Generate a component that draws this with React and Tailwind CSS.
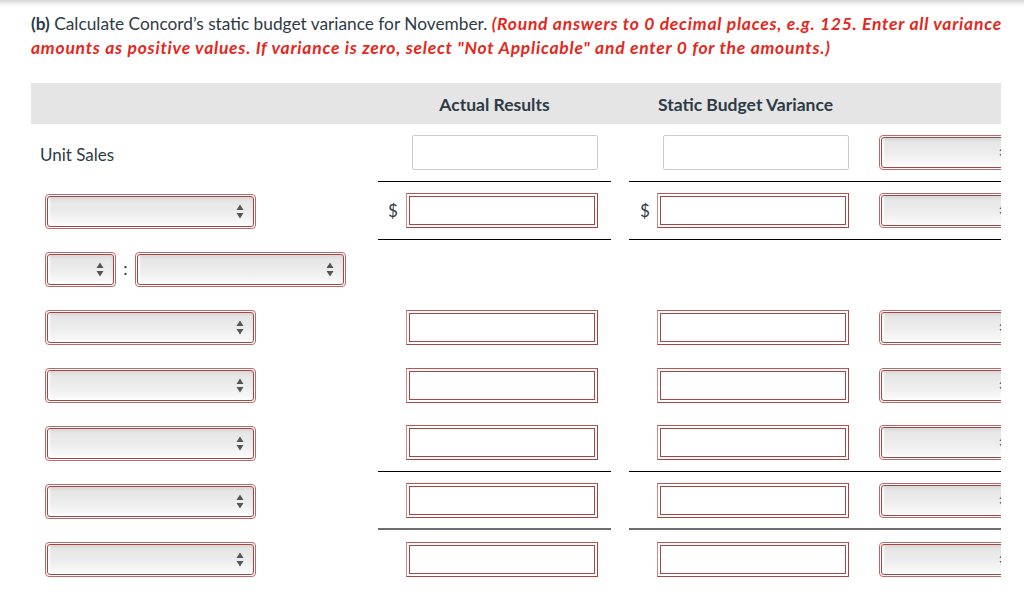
import React from "react";

const font = { fontFamily: "Lato, 'Open Sans', 'Liberation Sans', sans-serif" };

function Arrows() {
  return (
    <svg width="8" height="15" viewBox="0 0 8 15" className="shrink-0">
      <polygon points="0.5,6 4,0.5 7.5,6" fill="#555" />
      <polygon points="0.5,9 7.5,9 4,14.5" fill="#555" />
    </svg>
  );
}

function Select({ w }) {
  return (
    <div
      className="h-[35px] shrink-0 rounded-[4px] border border-[#b86a6a] bg-white p-px"
      style={{ width: w }}
    >
      <div className="flex h-full w-full items-center justify-end rounded-[3px] border border-[#a94442] bg-gradient-to-b from-[#e4e4e4] via-[#ececec] to-[#fbfbfb] pr-[9px] shadow-[inset_2px_-2px_2px_rgba(255,255,255,0.9),inset_0_2px_3px_rgba(0,0,0,0.06)]">
        <Arrows />
      </div>
    </div>
  );
}

function RedInput() {
  return (
    <div className="h-[35px] w-[192px] shrink-0 border border-[#a94442] border-l-[#c98a8a] border-t-[#b55] bg-white p-[2px]">
      <div className="h-full w-full border border-[#a94442] bg-white" />
    </div>
  );
}

function GrayInput() {
  return <div className="h-[35px] w-[186px] shrink-0 rounded-[2px] border border-[#cccccc] bg-white" />;
}

function Dollar() {
  return <span className="w-[10px] text-[17px] text-[#2d3b45]">$</span>;
}

function Row({ left, actual, stat, sel = true, line, h = "h-[58px]" }) {
  const lineCls =
    line === "dark"
      ? "border-b border-black"
      : line === "gray"
      ? "border-b-2 border-[#6e6e6e]"
      : "";
  return (
    <div className={`flex ${h} items-stretch`}>
      <div className="flex w-[347px] shrink-0 items-center">{left}</div>
      <div className={`flex w-[233px] shrink-0 items-center justify-end gap-[8px] pr-[13px] ${lineCls}`}>
        {actual}
      </div>
      <div className="w-[18px] shrink-0" />
      <div className={`flex w-[420px] shrink-0 items-center ${lineCls}`}>
        <div className="flex w-[233px] shrink-0 items-center justify-end gap-[7px] pr-[13px]">{stat}</div>
        <div className="w-[17px] shrink-0" />
        {sel && <Select w={140} />}
      </div>
    </div>
  );
}

export default function App() {
  const dollarIn = (
    <>
      <Dollar />
      <RedInput />
    </>
  );
  return (
    <div className="min-h-[596px] w-[1024px] overflow-hidden bg-white" style={font}>
      <div className="h-[7px] bg-gradient-to-b from-[#d6d6d6] via-[#efefef] to-white" />
      <div className="ml-[31px] w-[985px]">
        <p className="mt-[5px] text-[17.3px] leading-[24px] text-[#2d3b45]">
          <b>(b)</b> Calculate Concord’s static budget variance for November.{" "}
          <b className="text-[17.5px] italic tracking-[0.74px] text-[#e4281d]">
            (Round answers to 0 decimal places, e.g. 125. Enter all variance amounts as positive values. If variance is
            zero, select "Not Applicable" and enter 0 for the amounts.)
          </b>
        </p>
      </div>
      <div className="ml-[31px] w-[970px] overflow-hidden">
        <div className="mt-[23px] w-[970px]">
          <div className="flex h-[41px] items-center bg-[#e5e5e5] pt-[3px] text-[17.5px] font-bold text-[#2d3b45]">
            <div className="w-[347px] shrink-0" />
            <div className="w-[233px] shrink-0 text-center">Actual Results</div>
            <div className="w-[18px] shrink-0" />
            <div className="w-[233px] shrink-0 text-center">Static Budget Variance</div>
          </div>
          <Row
            left={<span className="pl-[9px] pt-[3px] text-[17px] text-[#2d3b45]">Unit Sales</span>}
            actual={<GrayInput />}
            stat={<GrayInput />}
            line="dark"
          />
          <Row
            left={
              <div className="pl-[14px]">
                <Select w={211} />
              </div>
            }
            actual={dollarIn}
            stat={dollarIn}
            line="dark"
          />
          <Row
            left={
              <div className="flex items-center pl-[14px]">
                <Select w={71} />
                <span className="w-[19px] text-center text-[17px] text-[#2d3b45]">:</span>
                <Select w={211} />
              </div>
            }
            actual={null}
            stat={null}
            sel={false}
          />
          {[0, 1, 2, 3, 4].map((i) => (
            <Row
              key={i}
              left={
                <div className="pl-[14px]">
                  <Select w={211} />
                </div>
              }
              actual={<RedInput />}
              stat={<RedInput />}
              line={i === 2 ? "dark" : i === 3 ? "gray" : undefined}
            />
          ))}
        </div>
      </div>
    </div>
  );
}
